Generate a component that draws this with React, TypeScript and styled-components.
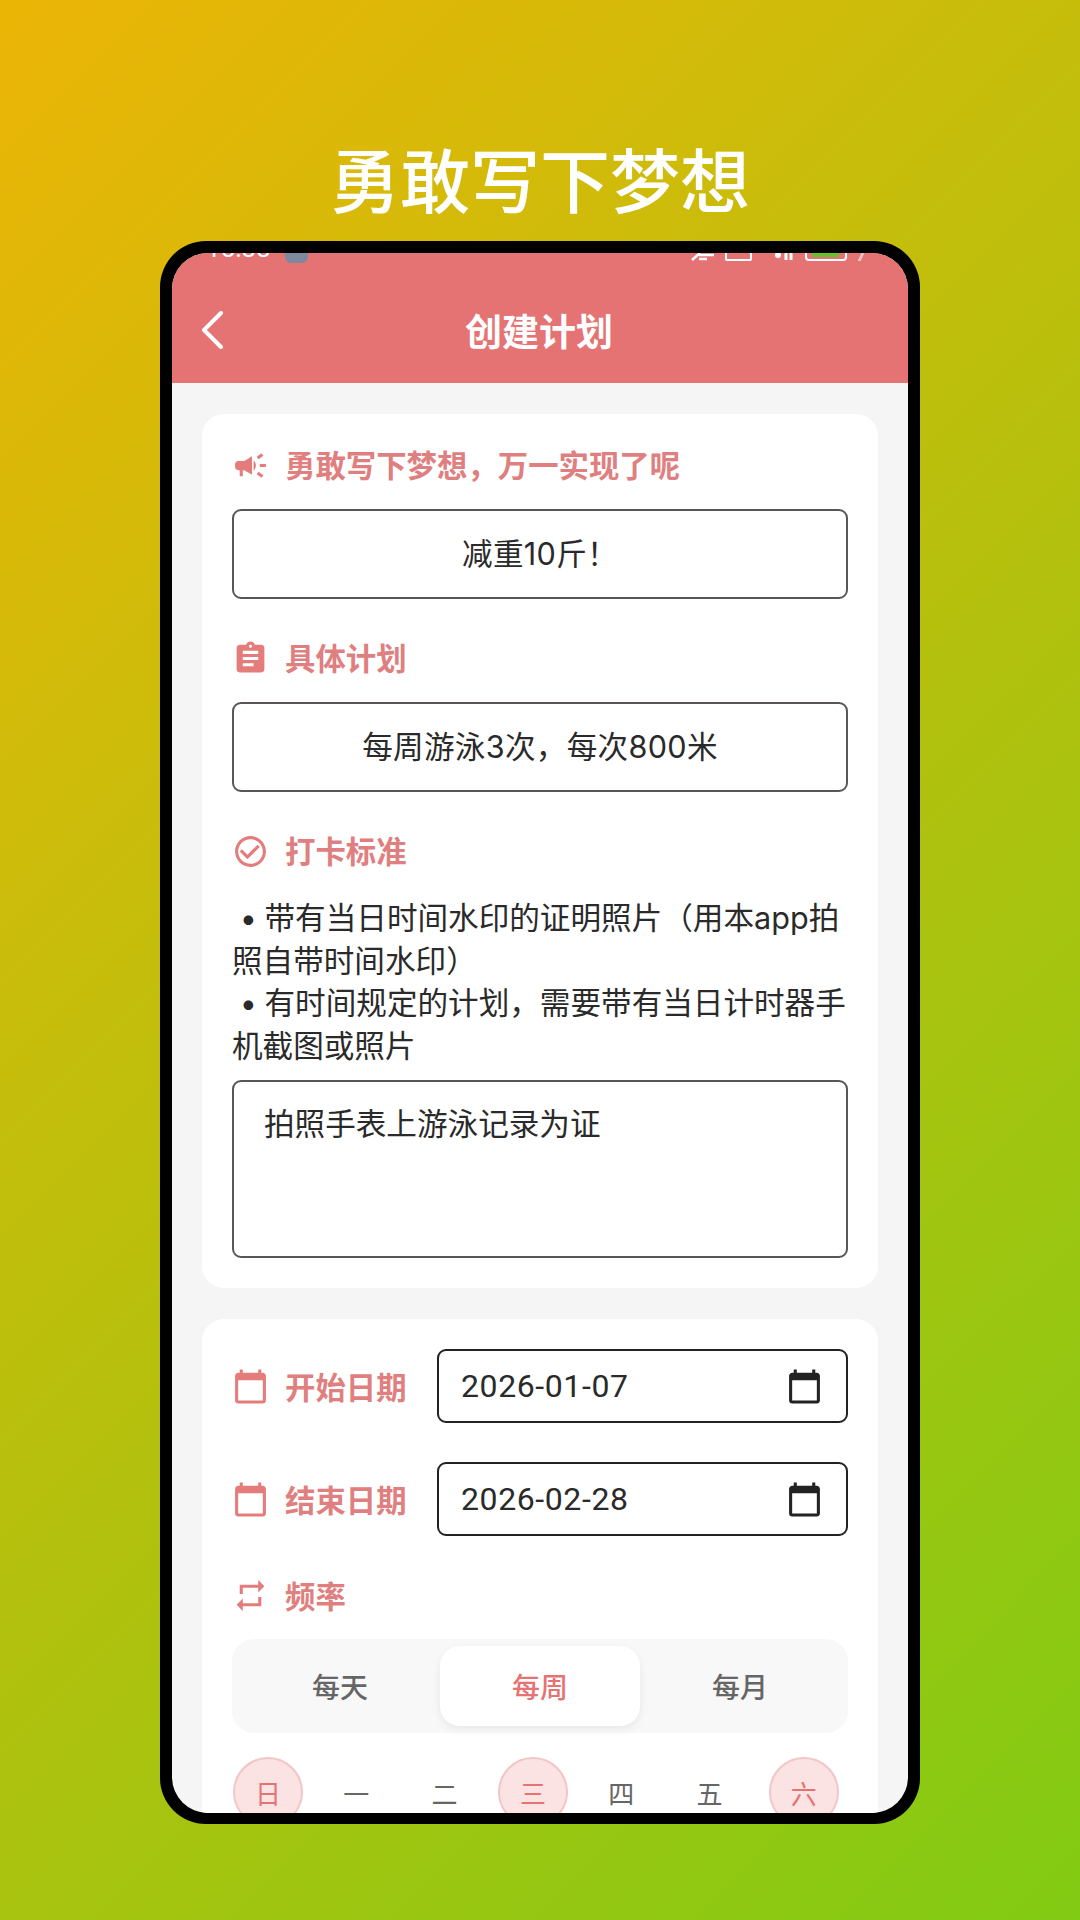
import React from "react";
import styled, { createGlobalStyle } from "styled-components";
import {
  MdAssignment,
  MdCalendarToday,
  MdCampaign,
  MdCheckCircleOutline,
  MdRepeat,
} from "react-icons/md";

const GlobalStyle = createGlobalStyle`
  * { box-sizing: border-box; }
  html, body { margin: 0; padding: 0; }
  body {
    font-family: Inter, "Noto Sans CJK SC", sans-serif;
    overflow: hidden;
  }
`;

const CORAL = "#e57373";

export default function App() {
  return (
    <Page>
      <GlobalStyle />
      <Headline>勇敢写下梦想</Headline>
      <Phone>
        <Screen>
          <Header>
            <StatusBar>
              <StatusTime>15:33</StatusTime>
              <StatusApp />
              <StatusIcons>
                <svg width="24" height="12" viewBox="0 0 24 12">
                  <path d="M1 11 L9 4 M8 6 H23 M8 10 H16" stroke="#fff" strokeWidth="2.5" fill="none" />
                </svg>
                <StatusBox />
                <svg width="24" height="12" viewBox="0 0 24 12">
                  <circle cx="7" cy="6" r="3" fill="#fff" />
                  <path d="M15 11 V3 M20 11 V3" stroke="#fff" strokeWidth="3" />
                </svg>
                <StatusBattery />
                <StatusCaret />
              </StatusIcons>
            </StatusBar>
            <BackButton>
              <svg width="24" height="38" viewBox="0 0 24 38">
                <path d="M21 2 L4 19 L21 36" stroke="#fff" strokeWidth="4" strokeLinecap="round" strokeLinejoin="round" fill="none" />
              </svg>
            </BackButton>
            <Title>创建计划</Title>
          </Header>

          <Content>
            <Card>
              <SectionLabel>
                <MdCampaign size={37} />
                <span>勇敢写下梦想，万一实现了呢</span>
              </SectionLabel>
              <TextField>减重10斤！</TextField>

              <SectionLabel $spaced>
                <MdAssignment size={37} />
                <span>具体计划</span>
              </SectionLabel>
              <TextField>每周游泳3次，每次800米</TextField>

              <SectionLabel $spaced>
                <MdCheckCircleOutline size={37} />
                <span>打卡标准</span>
              </SectionLabel>
              <Rules>
                {"\u2005•\u2005带有当日时间水印的证明照片（用本app拍照自带时间水印）"}
                <br />
                {"\u2005•\u2005有时间规定的计划，需要带有当日计时器手机截图或照片"}
              </Rules>
              <TextArea>拍照手表上游泳记录为证</TextArea>
            </Card>

            <Card>
              <DateRow>
                <RowLabel>
                  <MdCalendarToday size={37} />
                  <span>开始日期</span>
                </RowLabel>
                <DateField>
                  <span>2026-01-07</span>
                  <MdCalendarToday size={37} color="#222" />
                </DateField>
              </DateRow>
              <DateRow>
                <RowLabel>
                  <MdCalendarToday size={37} />
                  <span>结束日期</span>
                </RowLabel>
                <DateField>
                  <span>2026-02-28</span>
                  <MdCalendarToday size={37} color="#222" />
                </DateField>
              </DateRow>

              <FrequencyLabel>
                <MdRepeat size={37} />
                <span>频率</span>
              </FrequencyLabel>
              <Segments>
                <Segment>每天</Segment>
                <Segment $active>每周</Segment>
                <Segment>每月</Segment>
              </Segments>
              <Days>
                <Day $on>日</Day>
                <Day>一</Day>
                <Day>二</Day>
                <Day $on>三</Day>
                <Day>四</Day>
                <Day>五</Day>
                <Day $on $last>六</Day>
              </Days>
            </Card>
          </Content>
        </Screen>
      </Phone>
    </Page>
  );
}

const Page = styled.div`
  width: 1080px;
  height: 1920px;
  padding-top: 138px;
  display: flex;
  flex-direction: column;
  align-items: center;
  background: linear-gradient(135deg, #ecb506 0%, #82cb14 100%);
`;

const Headline = styled.h1`
  margin: 0 0 23px;
  height: 80px;
  font-size: 70px;
  line-height: 80px;
  font-weight: 500;
  color: #fff;
  font-family: "Noto Sans CJK SC", sans-serif;
`;

const Phone = styled.div`
  width: 760px;
  height: 1583px;
  padding: 12px 12px 11px;
  background: #000;
  border-radius: 46px;
`;

const Screen = styled.div`
  position: relative;
  height: 100%;
  overflow: hidden;
  background: #f5f5f5;
  border-radius: 36px;
`;

const Header = styled.header`
  position: relative;
  height: 130px;
  padding: 24px 30px 0 28px;
  display: grid;
  grid-template-columns: 1fr auto 1fr;
  align-items: center;
  background: ${CORAL};
`;

const StatusBar = styled.div`
  position: absolute;
  left: 34px;
  right: 45px;
  top: -22px;
  height: 32px;
  display: flex;
  align-items: flex-end;
`;

const StatusTime = styled.span`
  font-family: Roboto, sans-serif;
  font-size: 26px;
  line-height: 29px;
  color: #fff;
`;

const StatusApp = styled.span`
  width: 23px;
  height: 24px;
  margin-left: 14px;
  border-radius: 6px;
  background: #7d8a9e;
`;

const StatusIcons = styled.div`
  margin-left: auto;
  display: flex;
  align-items: flex-end;
  gap: 10px;
  margin-bottom: 2px;
  svg:nth-of-type(2) { margin-left: 9px; }
`;

const StatusBox = styled.span`
  width: 27px;
  height: 16px;
  border: 2px solid #fff;
  border-radius: 2px;
`;

const StatusBattery = styled.span`
  width: 42px;
  height: 16px;
  border: 2px solid #fff;
  border-radius: 4px;
  background: linear-gradient(#6cbf2c 85%, transparent 85%) center / 72% 100% no-repeat;
`;

const StatusCaret = styled.span`
  width: 3px;
  height: 10px;
  margin-left: 3px;
  background: #f4c4c4;
  transform: skewX(-25deg);
`;

const BackButton = styled.div`
  display: flex;
  align-items: center;
`;

const Title = styled.div`
  font-family: "Noto Sans CJK SC", sans-serif;
  font-size: 37px;
  font-weight: 700;
  color: #fff;
`;

const Content = styled.main`
  padding: 31px 30px 0;
  display: flex;
  flex-direction: column;
  gap: 31px;
`;

const Card = styled.section`
  padding: 30px;
  background: #fff;
  border-radius: 22px;
`;

const labelStyle = `
  display: flex;
  align-items: center;
  gap: 16px;
  font-family: "Noto Sans CJK SC", sans-serif;
  font-size: 30.4px;
  font-weight: 700;
  line-height: 37px;
  color: #e07f7f;
  svg { flex: none; color: #e57c7c; }
`;

const SectionLabel = styled.div<{ $spaced?: boolean }>`
  ${labelStyle}
  margin-top: ${(p) => (p.$spaced ? "41px" : "3px")};
  margin-bottom: 25px;
  span { transform: translateY(-1.5px); }
`;

const FrequencyLabel = styled.div`
  ${labelStyle}
  margin: 41px 0 25px;
`;

const TextField = styled.div`
  height: 90px;
  padding-bottom: 4px;
  display: flex;
  align-items: center;
  justify-content: center;
  font-size: 30.6px;
  letter-spacing: 0.3px;
  color: #2a2a2a;
  border: 2px solid #5a5558;
  border-radius: 9px;
`;

const Rules = styled.p`
  margin: 27px 0 13px;
  font-size: 30.6px;
  line-height: 42.5px;
  color: #2a2a2a;
`;

const TextArea = styled.div`
  height: 178px;
  padding: 20px 30px;
  font-size: 30.6px;
  line-height: 44px;
  color: #2a2a2a;
  border: 2px solid #5a5558;
  border-radius: 9px;
`;

const DateRow = styled.div`
  display: flex;
  align-items: center;
  & + & { margin-top: 39px; }
`;

const RowLabel = styled.div`
  ${labelStyle}
  width: 205px;
  flex: none;
`;

const DateField = styled.div`
  flex: 1;
  height: 74px;
  padding: 0 23px 0 22px;
  display: flex;
  align-items: center;
  justify-content: space-between;
  font-family: Roboto, sans-serif;
  font-size: 32px;
  letter-spacing: 0.6px;
  color: #2a2a2a;
  border: 2.5px solid #222;
  border-radius: 9px;
`;

const Segments = styled.div`
  height: 94px;
  padding: 7px 8px;
  display: grid;
  grid-template-columns: repeat(3, 1fr);
  background: #f8f8f8;
  border-radius: 22px;
`;

const Segment = styled.div<{ $active?: boolean }>`
  display: flex;
  align-items: center;
  justify-content: center;
  font-family: "Noto Sans CJK SC", sans-serif;
  font-size: 28px;
  font-weight: 500;
  color: ${(p) => (p.$active ? CORAL : "#666")};
  background: ${(p) => (p.$active ? "#fff" : "transparent")};
  border-radius: 20px;
  box-shadow: ${(p) => (p.$active ? "0 3px 10px rgba(0, 0, 0, 0.07)" : "none")};
`;

const Days = styled.div`
  margin-top: 24px;
  padding-left: 1px;
  display: flex;
  gap: 18.3px;
`;

const Day = styled.div<{ $on?: boolean; $last?: boolean }>`
  width: 70px;
  height: 70px;
  margin-left: ${(p) => (p.$last ? "6px" : "0")};
  display: flex;
  align-items: center;
  justify-content: center;
  font-family: "Noto Sans CJK SC", sans-serif;
  font-size: 26px;
  color: ${(p) => (p.$on ? CORAL : "#666")};
  background: ${(p) => (p.$on ? "#fbe3e3" : "transparent")};
  border: 2px solid ${(p) => (p.$on ? "#f2c6c6" : "transparent")};
  border-radius: 50%;
`;
